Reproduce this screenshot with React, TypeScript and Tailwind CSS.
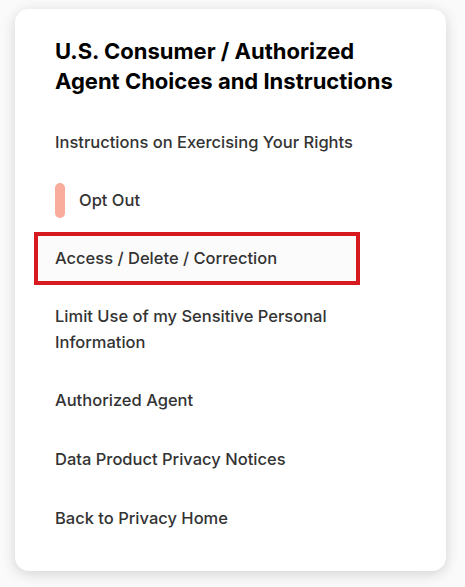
import React from 'react';

interface NavItem {
  label: string;
  active?: boolean;
  highlighted?: boolean;
}

const items: NavItem[] = [
  { label: 'Instructions on Exercising Your Rights' },
  { label: 'Opt Out', active: true },
  { label: 'Access / Delete / Correction', highlighted: true },
  { label: 'Limit Use of my Sensitive Personal Information' },
  { label: 'Authorized Agent' },
  { label: 'Data Product Privacy Notices' },
  { label: 'Back to Privacy Home' },
];

const App: React.FC = () => {
  return (
    <div className="min-h-screen bg-[#fafafa] pt-[9px] pl-[15px]" style={{ fontFamily: 'Inter, "Noto Sans", sans-serif' }}>
      <div className="w-[431px] h-[562px] bg-white rounded-[14px] shadow-[0_3px_14px_rgba(0,0,0,0.16)] pt-[27px] pl-[40px] pr-[30px]">
        {/* Section heading */}
        <h2 className="w-[345px] text-[22px] leading-[30px] font-bold text-black">
          U.S. Consumer / Authorized Agent Choices and Instructions
        </h2>

        <nav className="mt-[17px] flex flex-col">
          {items.map((item, i) => {
            if (item.highlighted) {
              return (
                <div key={item.label} className="h-[59px] flex items-center">
                  <a className="-ml-[21px] w-[326px] h-[53px] flex items-center pl-[17px] border-4 border-[#d71920] bg-[#fbfbfb] text-[16.5px] font-medium text-[#333]">
                    {item.label}
                  </a>
                </div>
              );
            }
            if (item.active) {
              return (
                <div key={item.label} className="h-[58px] flex items-center gap-[14px]">
                  <span className="w-[10px] h-[35px] rounded-full bg-[#f9ab9c]" />
                  <a className="text-[16.5px] font-medium text-[#333]">{item.label}</a>
                </div>
              );
            }
            return (
              <div
                key={item.label}
                className={`flex items-center pr-[60px] ${i === 0 ? 'h-[58px]' : 'min-h-[59px]'} ${i === 3 ? 'py-[15px]' : ''}`}
              >
                <a className="block text-[16.5px] leading-[26px] font-medium text-[#333]">{item.label}</a>
              </div>
            );
          })}
        </nav>
      </div>
    </div>
  );
};

export default App;
